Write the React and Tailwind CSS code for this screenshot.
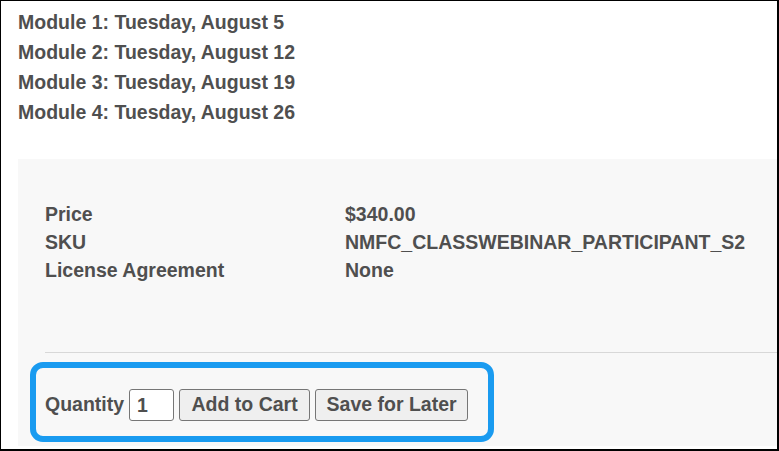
export default function App() {
  const modules = [
    'Module 1: Tuesday, August 5',
    'Module 2: Tuesday, August 12',
    'Module 3: Tuesday, August 19',
    'Module 4: Tuesday, August 26',
  ];
  const details = [
    ['Price', '$340.00'],
    ['SKU', 'NMFC_CLASSWEBINAR_PARTICIPANT_S2'],
    ['License Agreement', 'None'],
  ];

  return (
    <div className="box-border h-[451px] w-[779px] overflow-hidden border-t border-l border-r-2 border-b-2 border-black bg-white font-['Liberation_Sans',Arial,sans-serif] text-[19.5px] font-bold text-[#4f4f4f]">
      <div className="pl-[17px] pt-[6px] leading-[30px]">
        {modules.map((m) => (
          <div key={m}>{m}</div>
        ))}
      </div>

      <div className="relative ml-[17px] mt-[32px] h-[287px] bg-[#f8f8f8]">
        <div className="pl-[27px] pt-[41px] leading-[28px]">
          {details.map(([label, value]) => (
            <div key={label} className="flex">
              <div className="w-[300px]">{label}</div>
              <div>{value}</div>
            </div>
          ))}
        </div>

        <div className="ml-[27px] mt-[68px] border-t border-[#d8d8d8]" />

        <div className="mt-[36px] flex items-center pl-[27px]">
          <span className="mr-[5px]">Quantity</span>
          <input
            defaultValue="1"
            className="box-border h-[32px] w-[45px] rounded-[3px] border border-[#767676] bg-white pl-[7px] font-bold text-[#4f4f4f] outline-none"
          />
          <button className="ml-[5px] box-border h-[32px] w-[131px] rounded-[3px] border border-[#767676] bg-[#efefef] font-bold text-[#4f4f4f]">
            Add to Cart
          </button>
          <button className="ml-[5px] box-border h-[32px] w-[153px] rounded-[3px] border border-[#767676] bg-[#efefef] font-bold text-[#4f4f4f]">
            Save for Later
          </button>
        </div>

        <div className="pointer-events-none absolute left-[12px] top-[203px] h-[80px] w-[464px] rounded-[13px] border-[6px] border-[#1a9bf0]" />
      </div>
    </div>
  );
}
